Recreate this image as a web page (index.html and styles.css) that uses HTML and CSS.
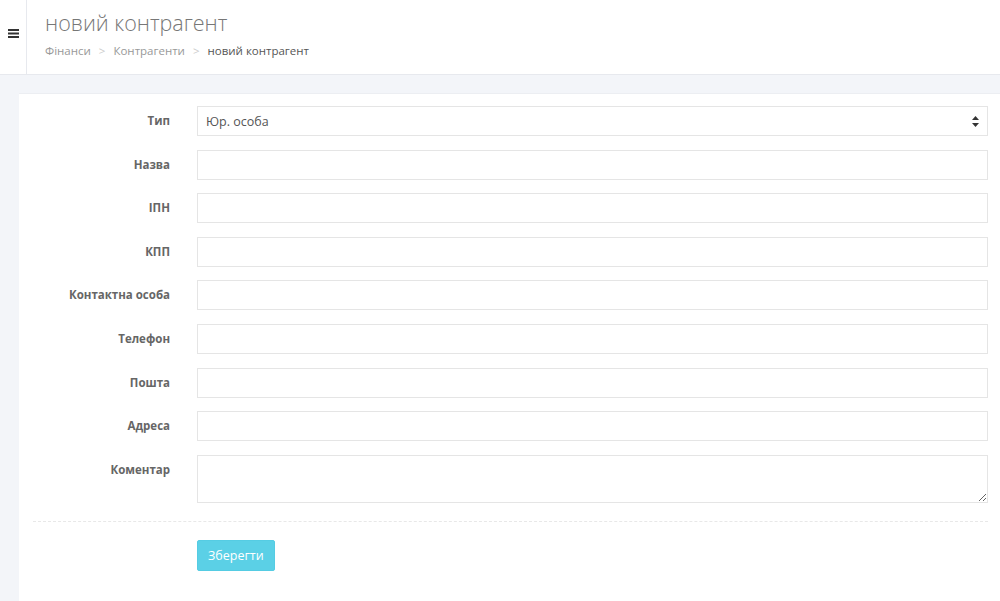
FILE: index.html
```html
<!DOCTYPE html>
<html lang="uk">
<head>
    <meta charset="UTF-8">
    <title>новий контрагент</title>
    <link rel="stylesheet" href="styles.css">
</head>
<body>
    <div class="topbar">
        <div class="toggle">
            <svg width="11" height="9" viewBox="0 0 11 9"><rect y="0" width="11" height="2" fill="#333"/><rect y="3.5" width="11" height="2" fill="#333"/><rect y="7" width="11" height="2" fill="#333"/></svg>
        </div>
        <div class="page-head">
            <h1>новий контрагент</h1>
            <div class="crumbs">
                <a>Фінанси</a><span class="sep">&gt;</span><a>Контрагенти</a><span class="sep">&gt;</span><span class="current">новий контрагент</span>
            </div>
        </div>
    </div>

    <div class="content">
        <div class="card">
            <form class="form">
                <div class="row">
                    <label>Тип</label>
                    <div class="field select">
                        <span>Юр. особа</span>
                        <svg width="7" height="11" viewBox="0 0 7 11"><path d="M3.5 0 L7 4 L0 4 Z M0 7 L7 7 L3.5 11 Z" fill="#333"/></svg>
                    </div>
                </div>
                <div class="row"><label>Назва</label><input class="field" type="text"></div>
                <div class="row"><label>ІПН</label><input class="field" type="text"></div>
                <div class="row"><label>КПП</label><input class="field" type="text"></div>
                <div class="row"><label>Контактна особа</label><input class="field" type="text"></div>
                <div class="row"><label>Телефон</label><input class="field" type="text"></div>
                <div class="row"><label>Пошта</label><input class="field" type="text"></div>
                <div class="row"><label>Адреса</label><input class="field" type="text"></div>
                <div class="row"><label>Коментар</label><textarea class="field area"></textarea></div>
                <div class="actions">
                    <button type="button" class="btn-save">Зберегти</button>
                </div>
            </form>
        </div>
    </div>
</body>
</html>
```

FILE: styles.css
```css
body {
    margin: 0;
    font-family: "Open Sans", sans-serif;
    background: #f3f5f9;
    color: #555;
    height: 601px;
    overflow: hidden;
}

.topbar {
    display: flex;
    background: #fff;
    height: 74px;
    border-bottom: 1px solid #e7e9ee;
}

.toggle {
    width: 27px;
    border-right: 1px solid #e7e9ee;
    display: flex;
    justify-content: center;
    padding-top: 29px;
    box-sizing: border-box;
}

.page-head {
    padding-left: 18px;
}

.page-head h1 {
    margin: 9px 0 0;
    font-size: 21.5px;
    font-weight: 300;
    color: #777;
    line-height: 28px;
}

.crumbs {
    margin-top: 6px;
    font-size: 11.5px;
    color: #888;
}

.crumbs a {
    color: #999;
}

.crumbs .sep {
    color: #ccc;
    margin: 0 8px;
}

.crumbs .current {
    color: #555;
}

.content {
    padding: 18px 0 0 19px;
}

.card {
    background: #fff;
    border-top: 1px solid #eceef2;
    padding: 12px 12px 30px 14px;
}

.row {
    display: flex;
    align-items: flex-start;
    margin-bottom: 13.6px;
}

.row label {
    width: 137px;
    text-align: right;
    font-size: 11.5px;
    font-weight: 700;
    color: #666;
    padding-top: 7px;
    margin-right: 27px;
}

.field {
    flex: 1;
    height: 30px;
    border: 1px solid #e5e5e5;
    box-sizing: border-box;
    margin: 0;
    padding: 6px 8px;
    font-family: inherit;
    font-size: 12.5px;
    color: #555;
    outline: none;
}

.select {
    display: flex;
    align-items: center;
    justify-content: space-between;
    padding: 0 8px 0 8px;
}

.area {
    height: 48px;
    resize: vertical;
}

.actions {
    border-top: 1px dashed #e8e8e8;
    margin: 18px 0 0 0;
    padding: 18px 0 0 164px;
}

.btn-save {
    background: #5bd0e6;
    border: 1px solid #55cce3;
    color: #fff;
    font-family: inherit;
    font-size: 12.5px;
    border-radius: 2px;
    padding: 0 10px;
    height: 31px;
}
```
